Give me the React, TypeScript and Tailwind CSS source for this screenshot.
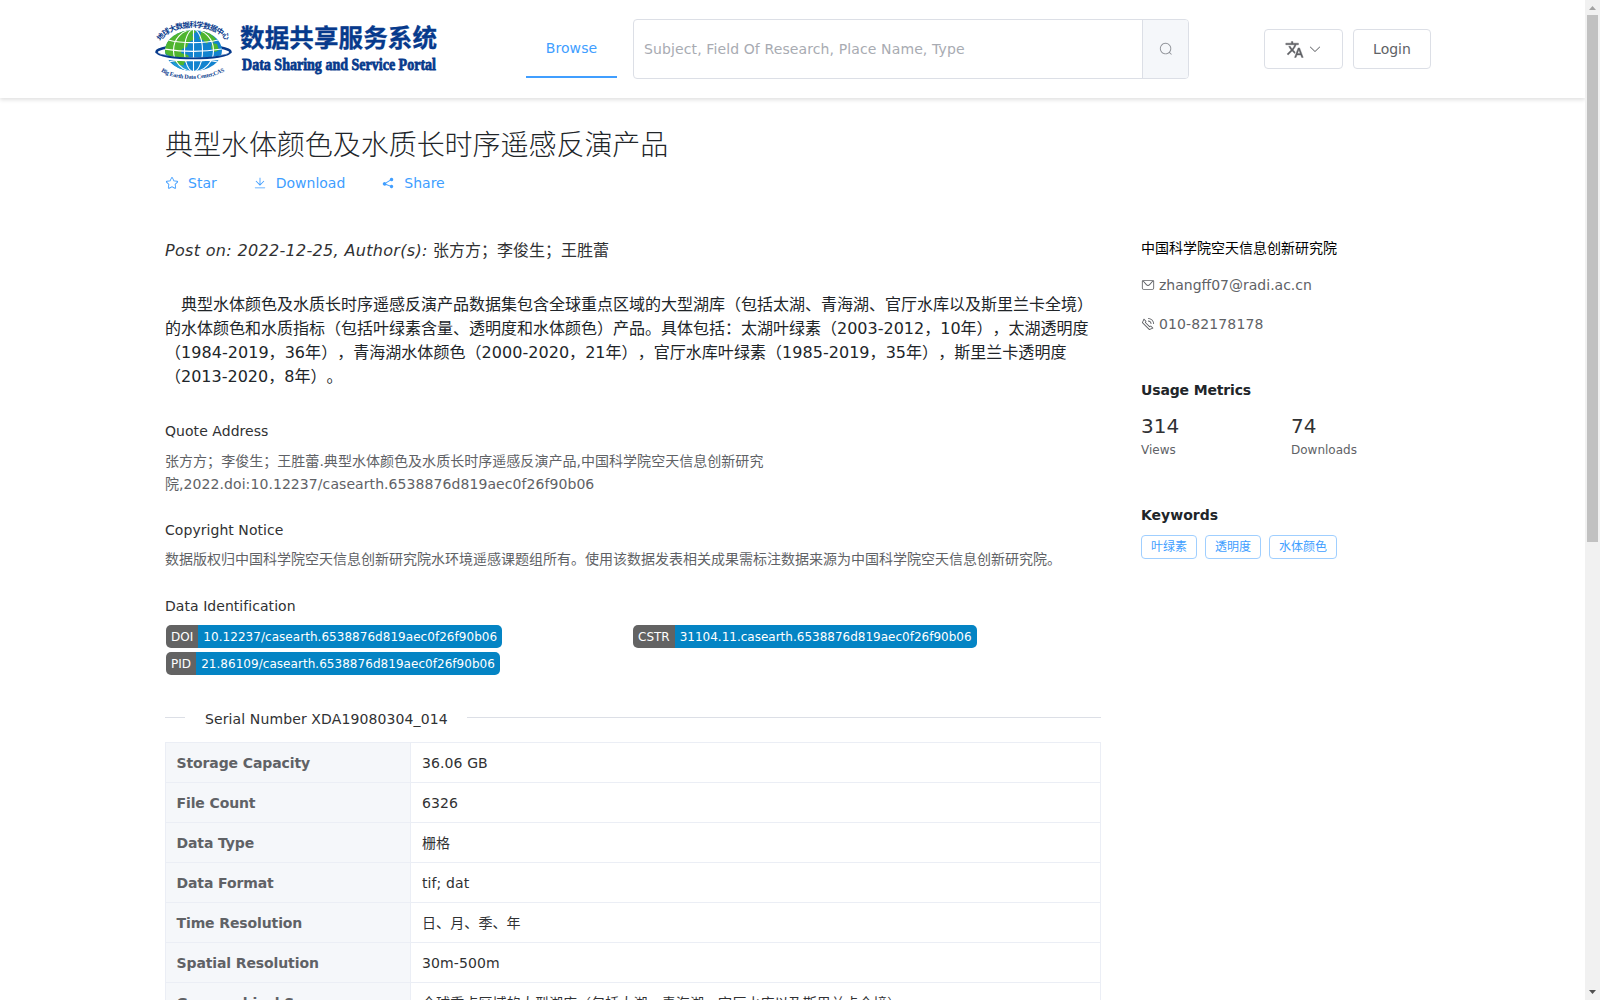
import type { FC, ReactNode } from 'react';

import { clsx } from 'clsx';

const iconPaths = {
	star: 'm512 747.84 228.16 119.936a6.4 6.4 0 0 0 9.28-6.72l-43.52-254.08 184.512-179.904a6.4 6.4 0 0 0-3.52-10.88l-255.104-37.12L517.76 147.904a6.4 6.4 0 0 0-11.52 0L392.192 379.072l-255.104 37.12a6.4 6.4 0 0 0-3.52 10.88L318.08 606.976l-43.584 254.08a6.4 6.4 0 0 0 9.28 6.72L512 747.84zM313.6 924.48a70.4 70.4 0 0 1-102.144-74.24l37.888-220.928L88.96 472.96A70.4 70.4 0 0 1 128 352.896l221.76-32.256 99.2-200.96a70.4 70.4 0 0 1 126.208 0l99.2 200.96 221.824 32.256a70.4 70.4 0 0 1 39.04 120.064L774.72 629.376l37.888 220.928a70.4 70.4 0 0 1-102.144 74.24L512 820.096l-198.4 104.32z',
	download:
		'M160 832h704a32 32 0 1 1 0 64H160a32 32 0 1 1 0-64zm384-253.696 236.288-236.352 45.248 45.248L508.8 704 192 387.2l45.248-45.248L480 584.704V128h64v450.304z',
	share:
		'm679.872 348.8-301.76 188.608a127.808 127.808 0 0 1 5.12 52.16l279.936 104.96a128 128 0 1 1-22.464 59.904l-279.872-104.96a128 128 0 1 1-16.64-166.272l301.696-188.608a128 128 0 1 1 33.92 54.272z',
	search:
		'm795.904 750.72 124.992 124.928a32 32 0 0 1-45.248 45.248L750.656 795.904a416 416 0 1 1 45.248-45.248zM480 832a352 352 0 1 0 0-704 352 352 0 0 0 0 704z',
	arrowDown:
		'M831.872 340.864 512 652.672 192.128 340.864a30.592 30.592 0 0 0-42.752 0 29.12 29.12 0 0 0 0 41.6L489.664 714.24a32 32 0 0 0 44.672 0l340.288-331.712a29.12 29.12 0 0 0 0-41.728 30.592 30.592 0 0 0-42.752 0z',
	message:
		'M128 224v512a64 64 0 0 0 64 64h640a64 64 0 0 0 64-64V224H128zm0-64h768a64 64 0 0 1 64 64v512a128 128 0 0 1-128 128H192A128 128 0 0 1 64 736V224a64 64 0 0 1 64-64zM904 224 656.512 506.88a192 192 0 0 1-289.024 0L120 224h784zm-698.944 0 210.56 240.704a128 128 0 0 0 192.704 0L818.944 224H205.056z',
	phone:
		'M79.36 432.256 591.744 944.64a32 32 0 0 0 35.2 6.784l253.44-108.544a32 32 0 0 0 9.984-52.032l-153.856-153.92a32 32 0 0 0-36.928-6.016l-69.888 34.944L358.08 394.24l35.008-69.888a32 32 0 0 0-5.952-36.928L233.152 133.568a32 32 0 0 0-52.032 10.048L72.512 397.056a32 32 0 0 0 6.784 35.2zm60.48-29.952 81.536-190.08L325.568 316.48l-24.64 49.216-20.608 41.216 32.576 32.64 271.552 271.552 32.64 32.64 41.216-20.672 49.28-24.576 104.192 104.128-190.08 81.472L139.84 402.304zM512 320v-64a256 256 0 0 1 256 256h-64a192 192 0 0 0-192-192zm0-192V64a448 448 0 0 1 448 448h-64a384 384 0 0 0-384-384z',
};

type IconName = keyof typeof iconPaths;

const actions: Array<{ icon: IconName; label: string }> = [
	{ icon: 'star', label: 'Star' },
	{ icon: 'download', label: 'Download' },
	{ icon: 'share', label: 'Share' },
];

const metrics = [
	{ value: '314', label: 'Views' },
	{ value: '74', label: 'Downloads' },
];

const keywords = ['叶绿素', '透明度', '水体颜色'];

const tableRows = [
	['Storage Capacity', '36.06 GB'],
	['File Count', '6326'],
	['Data Type', '栅格'],
	['Data Format', 'tif; dat'],
	['Time Resolution', '日、月、季、年'],
	['Spatial Resolution', '30m-500m'],
	['Geographical Scope', '全球重点区域的大型湖库（包括太湖、青海湖、官厅水库以及斯里兰卡全境）'],
];

const Icon: FC<{ name: IconName }> = function Icon({ name }) {
	return (
		<svg viewBox="0 0 1024 1024" fill="currentColor" className="size-[14px] shrink-0">
			<path d={iconPaths[name]} />
		</svg>
	);
};

const TranslateIcon: FC = function TranslateIcon() {
	return (
		<svg viewBox="0 0 24 24" fill="currentColor" className="size-[19px] shrink-0">
			<path
				d="M12.870 15.070l-2.540-2.510.030-.030A17.520 17.520 0 0 0 14.070 6H17V4h-7V2H8v2H1v1.990h11.170C11.500 7.920 10.440 9.750 9 11.350 8.070 10.320 7.300 9.190 6.690 8h-2c.730 1.630 1.730 3.170 2.980 4.560l-5.090 5.020L4 19l5-5 3.110 3.110.760-2.040zM18.500 10h-2L12 22h2l1.120-3h4.750L21 22h2l-4.500-12zm-2.620 7l1.620-4.330L19.120 17h-3.240z"
				stroke="currentColor"
				strokeWidth="0.5"
			/>
		</svg>
	);
};

const Logo: FC = function Logo() {
	return (
		<svg viewBox="0 0 290 66" className="h-[66px] w-[290px] shrink-0 overflow-visible">
			<defs>
				<clipPath id="globe">
					<ellipse cx="41.500" cy="34.500" rx="28.500" ry="20.500" />
				</clipPath>
				<path id="arc-top" d="M8.500 25.500 C20 6.500 63 6.500 75 26" />
				<path id="arc-bottom" d="M9 55.500 C25 65.500 55 65.500 74 54.500" />
			</defs>
			{/* Ring behind the globe */}
			<ellipse cx="41.500" cy="36" rx="37" ry="6.500" fill="none" stroke="#073a8c" strokeWidth="2.600" />
			<g clipPath="url(#globe)">
				<rect x="12" y="13" width="60" height="43" fill="#1283cf" />
				<path
					d="M12 13h30l2 3-4 3 3 4-6 3-2 5-5 2-1 4 7 2 2 4-6 4-1 6-6-3-4-8-9-5zM50 14l8 3 6 6-3 4-4-3-2 4-4-4-4-1zM60 27l5 1 2 6-4 2-4-4z"
					fill="#4fb52f"
				/>
				<path d="M20 45l8 4 10 1-3 5-12-3z" fill="#1f9bd6" />
				<g fill="none" stroke="#fff" strokeWidth="1.100">
					<ellipse cx="41.500" cy="34.500" rx="9" ry="21" />
					<ellipse cx="41.500" cy="34.500" rx="20" ry="21" />
					<path d="M41.500 13v43M16 24c14 3.500 36 3.500 50 0M12 33c18 3 40 3 58 0M16 46c14-3 36-3 50 0" />
				</g>
			</g>
			<path d="M4.500 37c2 8.500 72 8.500 74 0" fill="none" stroke="#fff" strokeWidth="3.800" />
			<path d="M4.500 36c1 8.500 73 8.500 74 0" fill="none" stroke="#073a8c" strokeWidth="1.900" />
			<g fill="#073a8c">
				<text className="font-['Noto_Sans_CJK_SC',sans-serif] text-[7.5px] font-bold">
					<textPath href="#arc-top" textLength="74">
						地球大数据科学数据中心
					</textPath>
				</text>
				<text className="font-['Liberation_Serif',serif] text-[6px] font-bold">
					<textPath href="#arc-bottom" textLength="66">
						Big Earth Data Center,CAS
					</textPath>
				</text>
				<text
					x="88"
					y="31"
					textLength="197"
					stroke="#073a8c"
					strokeWidth="0.300"
					className="font-['Noto_Sans_CJK_SC',sans-serif] text-[24.5px] font-bold"
				>
					数据共享服务系统
				</text>
				<text
					x="90"
					y="54"
					textLength="194"
					lengthAdjust="spacingAndGlyphs"
					stroke="#073a8c"
					strokeWidth="0.800"
					className="font-['Liberation_Serif',serif] text-[17.5px] font-bold"
				>
					Data Sharing and Service Portal
				</text>
			</g>
		</svg>
	);
};

const Header: FC = function Header() {
	return (
		<header className="flex h-[98px] shrink-0 bg-white pl-[152px] shadow-[0_2px_4px_rgba(0,0,0,0.12)]">
			<div className="w-[374px] pt-4">
				<Logo />
			</div>
			<nav className="mt-[18px] flex h-[60px] w-[91px] items-center justify-center border-b-2 border-[#409eff] pt-[2px] tracking-[0.1px] text-[#409eff]">
				Browse
			</nav>
			<div className="mt-[19px] ml-4 flex h-[60px] w-[556px] overflow-hidden rounded-[4px] border border-[#dcdfe6]">
				<div className="flex flex-1 items-center pl-[10px] tracking-[0.115px] text-[#a8abb2]">
					Subject, Field Of Research, Place Name, Type
				</div>
				<div className="flex w-[46px] items-center justify-center border-l border-[#dcdfe6] bg-[#f5f7fa] text-[#909399]">
					<Icon name="search" />
				</div>
			</div>
			<div className="mt-[29px] ml-[75px] flex h-10 gap-[10px] text-[#606266]">
				<button className="flex w-[79px] items-center justify-center gap-1 rounded-[4px] border border-[#dcdfe6]">
					<TranslateIcon />
					<Icon name="arrowDown" />
				</button>
				<button className="w-[78px] rounded-[4px] border border-[#dcdfe6]">Login</button>
			</div>
		</header>
	);
};

const Badge: FC<{ label: string; value: string; className?: string }> = function Badge({
	label,
	value,
	className,
}) {
	return (
		<div
			className={clsx(
				'mb-1 flex h-[23px] w-fit overflow-hidden rounded-[5px] text-[12px] leading-[24px] text-white',
				className,
			)}
		>
			<span className="bg-[#636363] px-[5px]">{label}</span>
			<span className="bg-[#0484c4] px-[5px]">{value}</span>
		</div>
	);
};

const Section: FC<{ title: string; className?: string; children: ReactNode }> = function Section({
	title,
	className,
	children,
}) {
	return (
		<section className={className}>
			<h2 className="leading-5 tracking-[0.05px] text-[#303133]">{title}</h2>
			{children}
		</section>
	);
};

const Detail: FC = function Detail() {
	return (
		<main className="w-[936px] pt-px">
			<p className="text-[16px] leading-6 text-[#303133]">
				<i className="tracking-[0.32px]">Post on: 2022-12-25, Author(s): </i>
				张方方；李俊生；王胜蕾
			</p>
			<p className="mt-[30px] indent-4 text-[16px] leading-6 text-[#212529]">
				典型水体颜色及水质长时序遥感反演产品数据集包含全球重点区域的大型湖库（包括太湖、青海湖、官厅水库以及斯里兰卡全境）
				<br />
				的水体颜色和水质指标（包括叶绿素含量、透明度和水体颜色）产品。具体包括：太湖叶绿素（2003-2012，10年），太湖透明度
				<br />
				<span className="tracking-[0.04px]">
					（1984-2019，36年），青海湖水体颜色（2000-2020，21年），官厅水库叶绿素（1985-2019，35年），斯里兰卡透明度
				</span>
				<br />
				（2013-2020，8年）。
			</p>
			<Section title="Quote Address" className="mt-8">
				<p className="mt-[9px] leading-[23px] text-[#606266]">
					<span className="tracking-[0.035px]">
						张方方；李俊生；王胜蕾.典型水体颜色及水质长时序遥感反演产品,中国科学院空天信息创新研究
					</span>
					<br />
					<span className="tracking-[0.075px]">
						院,2022.doi:10.12237/casearth.6538876d819aec0f26f90b06
					</span>
				</p>
			</Section>
			<Section title="Copyright Notice" className="mt-6">
				<p className="mt-2 leading-[23px] text-[#606266]">
					数据版权归中国科学院空天信息创新研究院水环境遥感课题组所有。使用该数据发表相关成果需标注数据来源为中国科学院空天信息创新研究院。
				</p>
			</Section>
			<Section title="Data Identification" className="mt-[25px]">
				<div className="mt-[9px] grid grid-cols-2">
					<Badge
						label="DOI"
						value="10.12237/casearth.6538876d819aec0f26f90b06"
						className="ml-px tracking-[0.04px]"
					/>
					<Badge label="CSTR" value="31104.11.casearth.6538876d819aec0f26f90b06" />
					<Badge
						label="PID"
						value="21.86109/casearth.6538876d819aec0f26f90b06"
						className="ml-px tracking-[0.04px]"
					/>
				</div>
			</Section>
			<div className="mt-6 flex h-[30px] items-center gap-5 text-[#303133]">
				<div className="mb-[2px] h-px w-5 bg-[#dcdfe6]" />
				<span className="-mr-px pt-px tracking-[0.115px]">Serial Number XDA19080304_014</span>
				<div className="mb-[2px] h-px flex-1 bg-[#dcdfe6]" />
			</div>
			<table className="mt-[9px] w-full table-fixed border-collapse text-[#303133]">
				<tbody>
					{tableRows.map(([label, value]) => (
						<tr key={label} className="h-10">
							<th className="w-[245px] border border-[#ebeef5] bg-[#f5f7fa] px-[10.5px] text-left font-bold tracking-[-0.11px] text-[#606266]">
								{label}
							</th>
							<td className="border border-[#ebeef5] px-[11px] tracking-[0.1px]">{value}</td>
						</tr>
					))}
				</tbody>
			</table>
		</main>
	);
};

const Sidebar: FC = function Sidebar() {
	return (
		<aside className="w-[290px]">
			<p className="leading-5 text-black">中国科学院空天信息创新研究院</p>
			<p className="mt-[17px] flex h-5 items-center gap-1 text-[#606266]">
				<Icon name="message" />
				zhangff07@radi.ac.cn
			</p>
			<p className="mt-[19px] flex h-5 items-center gap-1 tracking-[0.12px] text-[#606266]">
				<Icon name="phone" />
				010-82178178
			</p>
			<h3 className="mt-[46px] leading-5 font-bold tracking-[-0.15px] text-[#212529]">
				Usage Metrics
			</h3>
			<div className="mt-3 grid w-[300px] grid-cols-2">
				{metrics.map(({ value, label }) => (
					<div key={label}>
						<div className="text-[20px] leading-7 text-[#303133]">{value}</div>
						<div className="text-[12px] leading-5 text-[#606266]">{label}</div>
					</div>
				))}
			</div>
			<h3 className="mt-[45px] leading-5 font-bold text-[#212529]">Keywords</h3>
			<div className="mt-[10px] flex gap-2">
				{keywords.map((keyword) => (
					<span
						key={keyword}
						className="h-6 rounded-[4px] border border-[#a0cfff] px-[9px] text-[12px] leading-[23px] text-[#409eff]"
					>
						{keyword}
					</span>
				))}
			</div>
		</aside>
	);
};

// Classic desktop scrollbar with arrow buttons at both ends
const Scrollbar: FC = function Scrollbar() {
	return (
		<div className="flex w-[15px] shrink-0 flex-col items-center bg-[#f1f1f1]">
			<svg viewBox="0 0 15 15" className="size-[15px]">
				<path d="M4 10h7L7.500 6z" fill="#a3a3a3" />
			</svg>
			<div className="h-[527px] w-[11px] bg-[#c1c1c1]" />
			<svg viewBox="0 0 15 15" className="mt-auto size-[15px]">
				<path d="M4 5h7L7.500 9z" fill="#505050" />
			</svg>
		</div>
	);
};

export default function App() {
	return (
		<div className="flex h-screen overflow-hidden bg-white font-['DejaVu_Sans','Noto_Sans_CJK_SC',sans-serif] text-[14px] leading-5 [text-spacing-trim:space-all]">
			<div className="flex min-w-0 flex-1 flex-col">
				<Header />
				<div className="pl-[165px]">
					<h1 className="mt-7 text-[28px] leading-10 font-light tracking-[-0.04px] text-[#212529]">
						典型水体颜色及水质长时序遥感反演产品
					</h1>
					<div className="mt-[7px] flex gap-9 text-[#409eff]">
						{actions.map(({ icon, label }) => (
							<a key={label} className="flex items-center gap-[9px]">
								<Icon name={icon} />
								{label}
							</a>
						))}
					</div>
					<div className="mt-[45px] flex gap-10">
						<Detail />
						<Sidebar />
					</div>
				</div>
			</div>
			<Scrollbar />
		</div>
	);
}
